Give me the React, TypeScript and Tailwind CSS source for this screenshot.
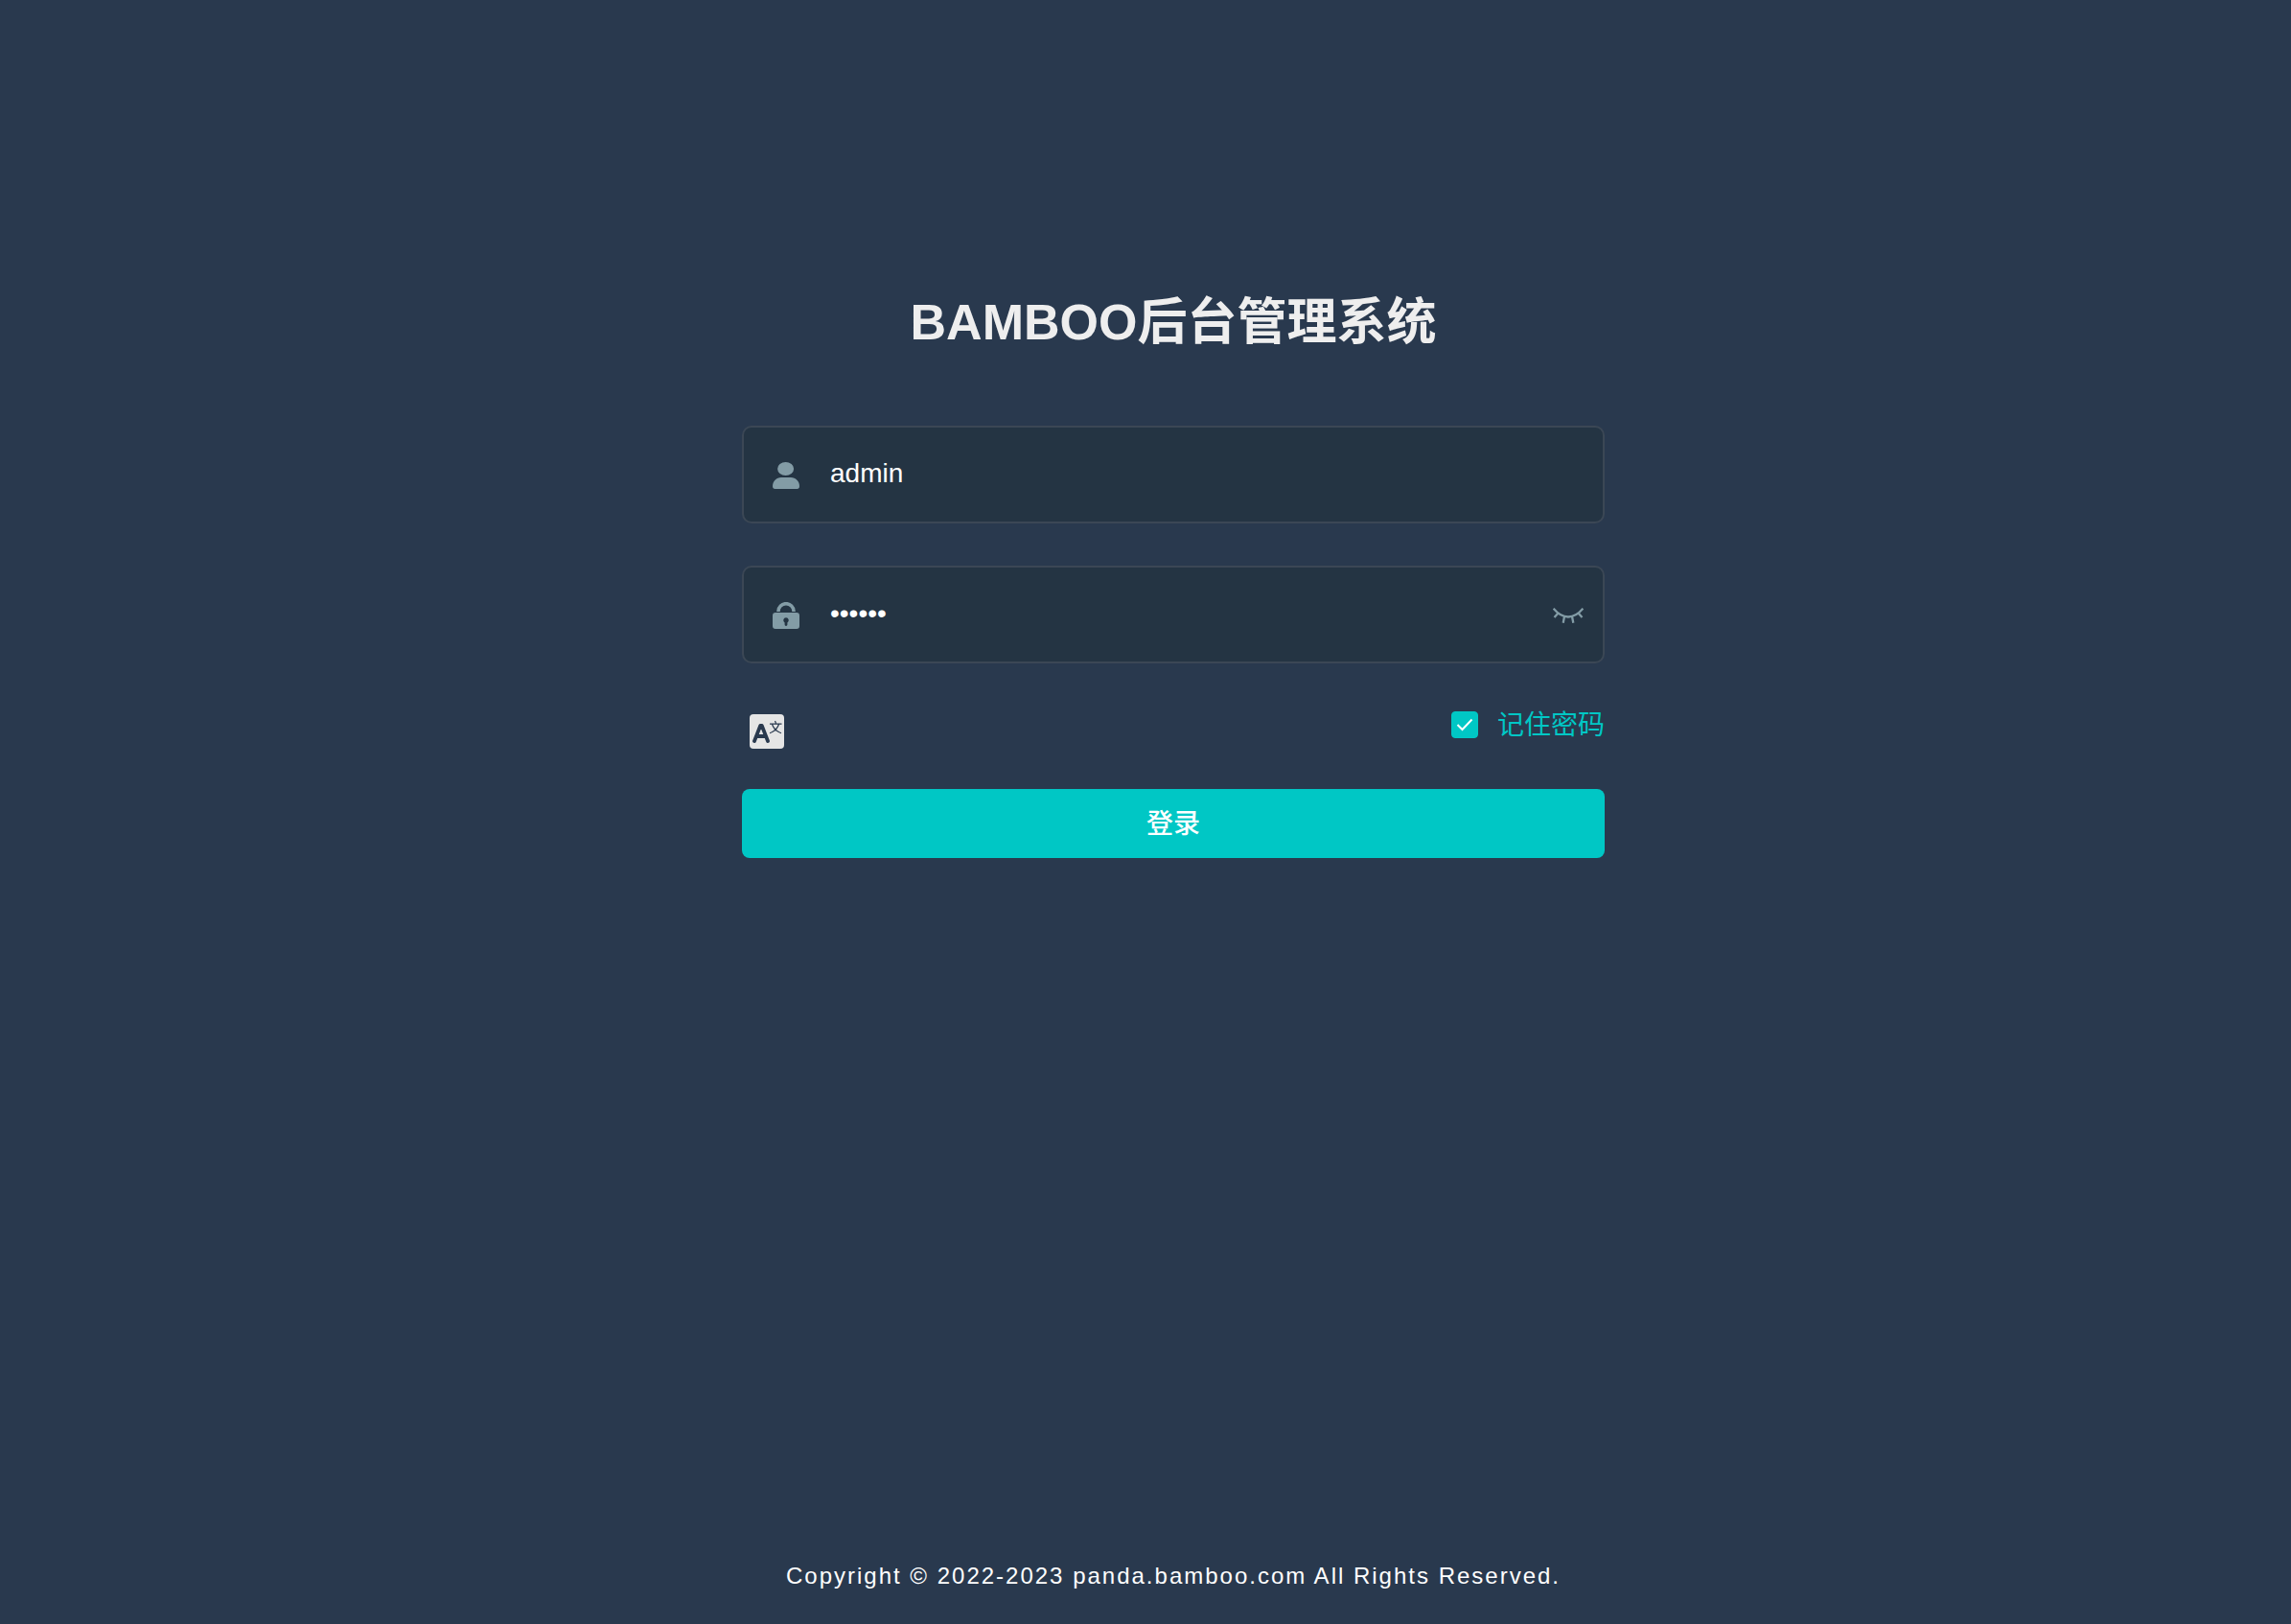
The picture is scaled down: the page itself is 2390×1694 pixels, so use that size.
import { useState } from 'react';

const fieldClass =
  'flex h-[102px] items-center rounded-[10px] border-2 border-[#3b4755] bg-[#243443] pt-0.5 pl-[30px] pr-5 text-[#839ca6]';
const inputClass = 'ml-8 h-[92px] min-w-0 flex-1 self-start bg-transparent text-[28px] text-white outline-none';

function UserIcon() {
  return (
    <svg viewBox="0 0 28 28" className="size-7 shrink-0 fill-current" aria-hidden="true">
      <ellipse cx="13.6" cy="7" rx="8.5" ry="7" />
      <path d="M9 16h10c5 0 9 4 9 9 0 2-.8 3-2.500 3h-23C.8 28 0 27 0 25c0-5 4-9 9-9Z" />
    </svg>
  );
}

function LockIcon() {
  return (
    <svg viewBox="0 0 28 28" className="size-7 shrink-0" aria-hidden="true">
      <path d="M6 10V9.500a8 7.800 0 0 1 16 0V10" fill="none" stroke="currentColor" strokeWidth="3.600" />
      <path
        fill="currentColor"
        fillRule="evenodd"
        d="M3 11h22a3 3 0 0 1 3 3v11a3 3 0 0 1-3 3H3a3 3 0 0 1-3-3V14a3 3 0 0 1 3-3Zm11 5.200a2.800 2.800 0 0 0-1.400 5.200v2.100a1.400 1.400 0 0 0 2.800 0v-2.100A2.800 2.800 0 0 0 14 16.200Z"
      />
    </svg>
  );
}

function ClosedEyeIcon() {
  return (
    <svg viewBox="0 0 32 16" className="h-4 w-8" fill="none" stroke="currentColor" strokeWidth="2.300" aria-hidden="true">
      <path d="M.6.8C4.500 5.500 10 9.500 16 9.500S27.500 5.500 31.400.8M5.500 5.500 1.500 10M12 9l-1.300 6.800M20 9l1.300 6.800M26.500 5.500l4 4.500" />
    </svg>
  );
}

function LanguageIcon() {
  return (
    <svg viewBox="0 0 36 36" className="size-9" fill="none" stroke="#29394e" aria-hidden="true">
      <rect width="36" height="36" rx="4" fill="#e5e5e5" stroke="none" />
      <path d="M5 28 11.200 12h1.600L19 28M7.500 23h9" strokeWidth="3.800" strokeLinecap="round" strokeLinejoin="round" />
      <path d="M26.500 7l1 2.500M21 10.200h12.500M23.500 10.500c1.500 4.500 4.500 7.500 9.500 9.200M30.500 10.500c-1.500 4.500-4.500 7.500-9.500 9.200" strokeWidth="1.200" />
    </svg>
  );
}

export default function App() {
  const [username, setUsername] = useState('admin');
  const [password, setPassword] = useState('111111');
  const [visible, setVisible] = useState(false);
  const [remember, setRemember] = useState(true);

  return (
    <div className="flex min-h-screen flex-col items-center bg-[#29394e] pl-[58px] pt-[304px] font-['Liberation_Sans','Noto_Sans_CJK_SC',sans-serif]">
      <main className="w-full max-w-[900px]">
        <h1 className="text-center text-[52px] leading-[64px] font-bold text-[#eeeeee]">BAMBOO后台管理系统</h1>
        <form className="mt-[76px]" onSubmit={(e) => e.preventDefault()}>
          <div className={fieldClass}>
            <label htmlFor="username" aria-label="用户名">
              <UserIcon />
            </label>
            <input
              id="username"
              className={inputClass}
              value={username}
              onChange={(e) => setUsername(e.target.value)}
            />
          </div>
          <div className={`${fieldClass} mt-11`}>
            <label htmlFor="password" aria-label="密码">
              <LockIcon />
            </label>
            <input
              id="password"
              type={visible ? 'text' : 'password'}
              className={inputClass}
              value={password}
              onChange={(e) => setPassword(e.target.value)}
            />
            <button type="button" aria-label="显示密码" onClick={() => setVisible(!visible)}>
              <ClosedEyeIcon />
            </button>
          </div>
          <div className="mt-[50px] flex h-7 items-center justify-between">
            <button type="button" aria-label="切换语言" className="ml-2 mt-[14px]">
              <LanguageIcon />
            </button>
            <label className="flex cursor-pointer items-center gap-5 text-[28px] leading-7 text-[#00c7c5]">
              <span className="grid size-7">
                <input
                  type="checkbox"
                  checked={remember}
                  onChange={(e) => setRemember(e.target.checked)}
                  className="peer col-start-1 row-start-1 size-7 appearance-none rounded border border-[#00c7c5] checked:bg-[#00c7c5]"
                />
                <svg
                  viewBox="0 0 28 28"
                  className="pointer-events-none invisible col-start-1 row-start-1 size-7 peer-checked:visible"
                  fill="none"
                  stroke="white"
                  strokeWidth="2"
                  aria-hidden="true"
                >
                  <path d="m6.500 14 5 5L21.500 8.500" />
                </svg>
              </span>
              <span className="pt-0.5">记住密码</span>
            </label>
          </div>
          <button
            type="submit"
            className="mt-[53px] h-[72px] w-full rounded-lg bg-[#00c7c5] pt-0.5 text-[28px] font-medium text-white"
          >
            登录
          </button>
        </form>
      </main>
      <footer className="mt-auto pb-8 text-center text-2xl leading-9 tracking-[2px] text-white">
        Copyright © 2022-2023 panda.bamboo.com All Rights Reserved.
      </footer>
    </div>
  );
}
